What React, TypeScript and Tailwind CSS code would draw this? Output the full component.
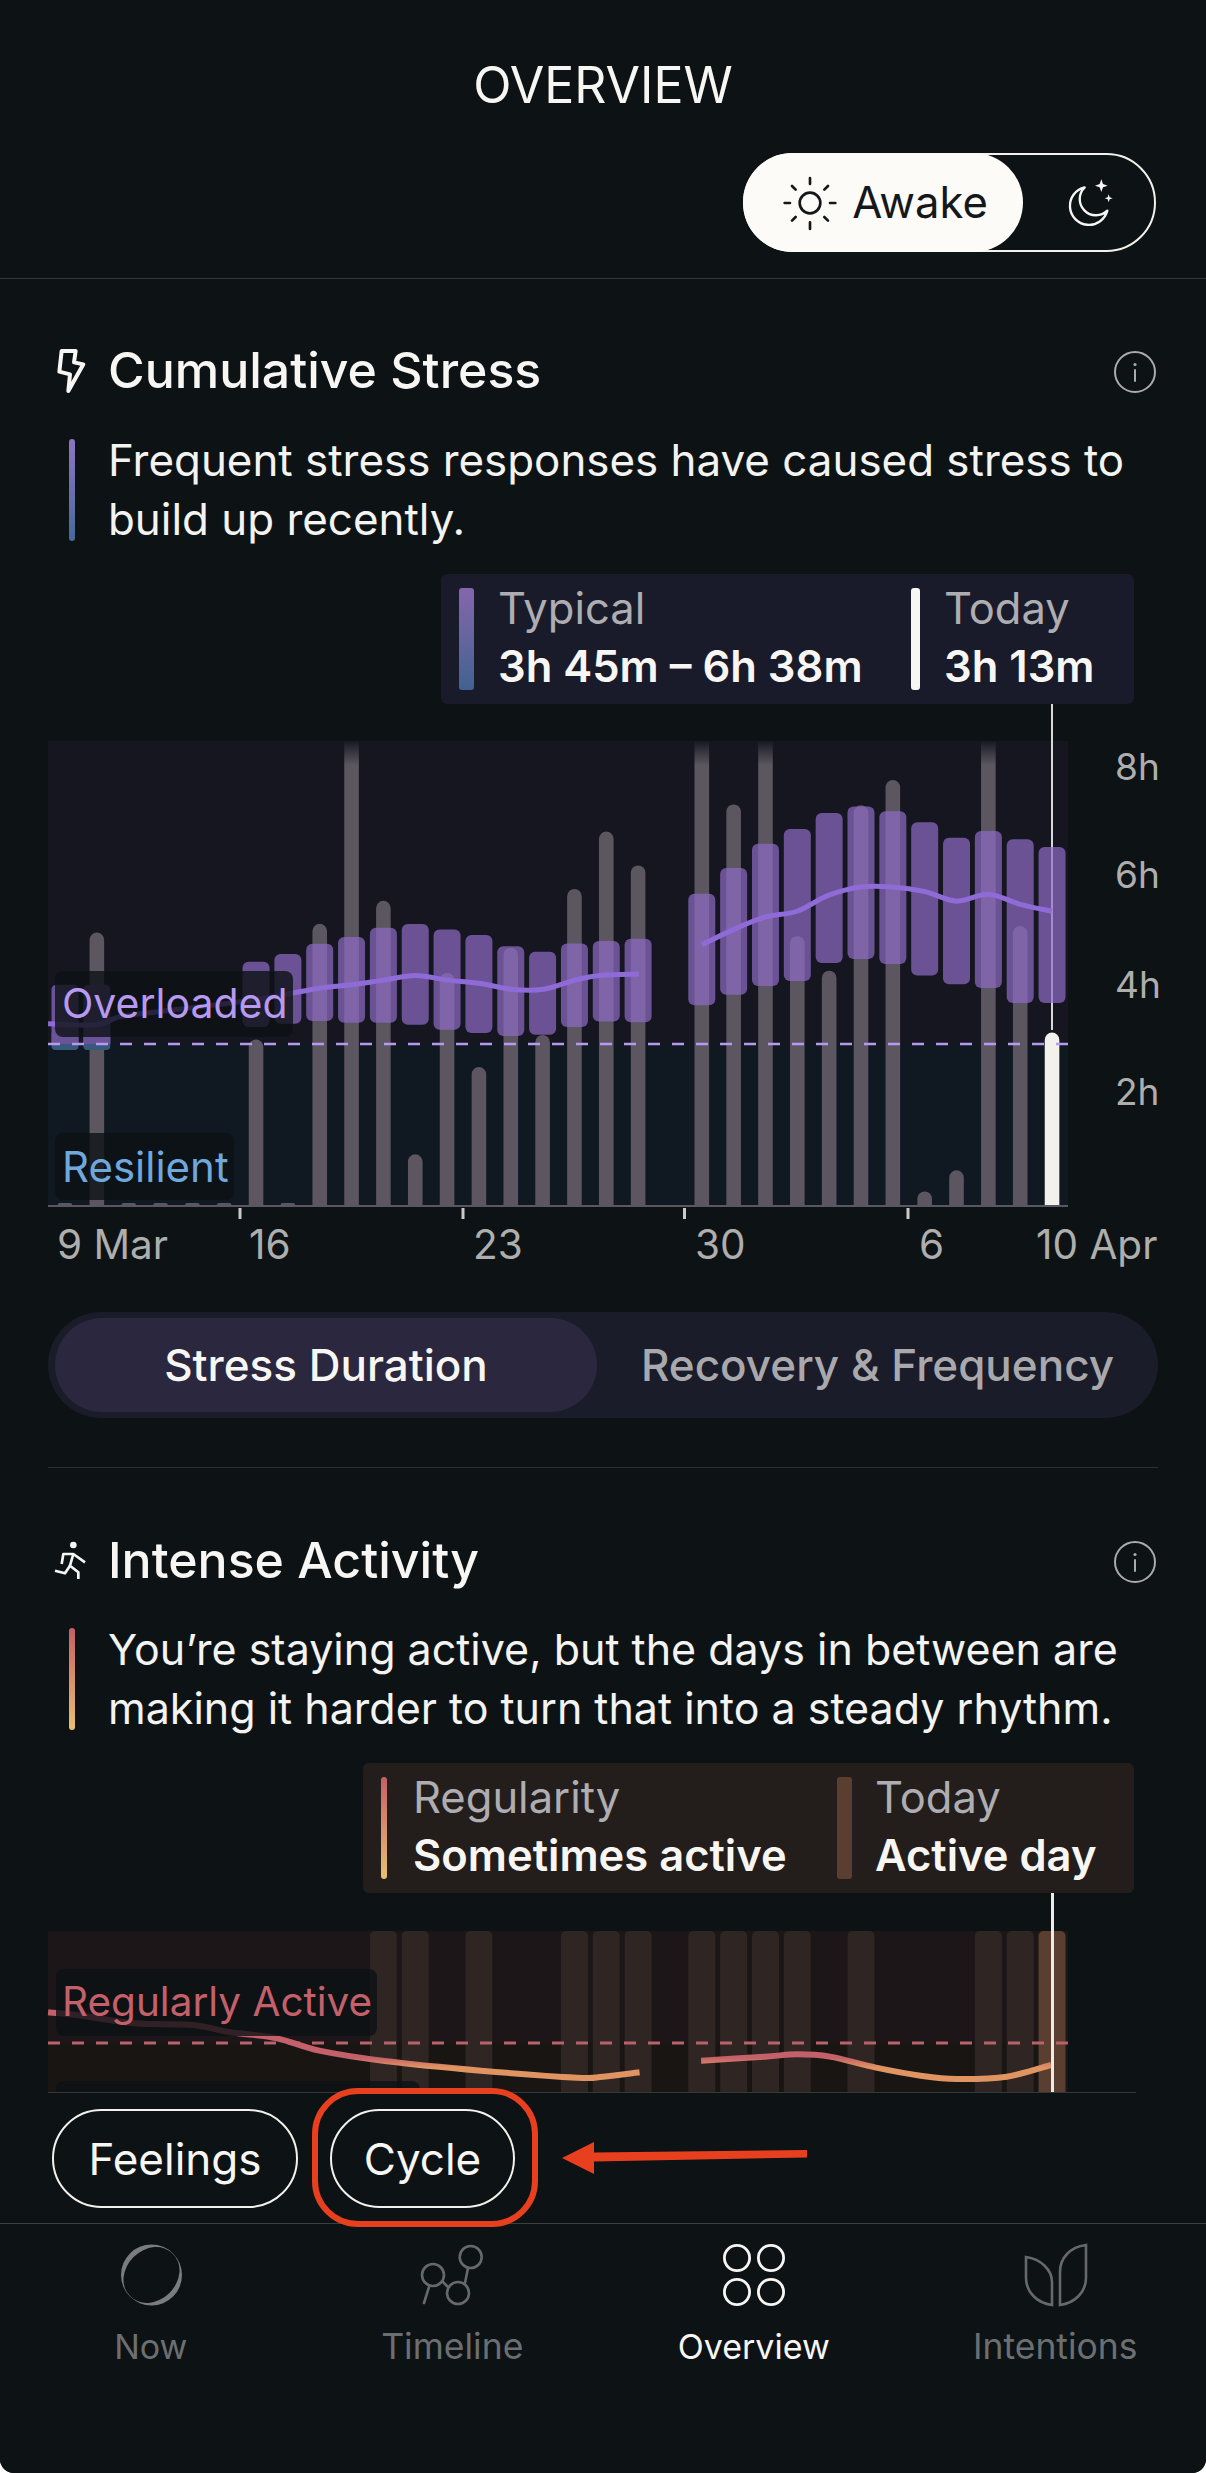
import React from "react";

const X = (i: number) => 65 + 31.84 * i;
const ZL = (x: number) => x / 2.6;
const ZR = (x: number) => 603 + x / 2.6;
const ZY = (y: number) => 560 + y / 2.178;
const Z3Y = (y: number) => 1900 + y / 3;

function smooth(p: number[][]) {
  let d = `M${p[0][0]} ${p[0][1]}`;
  for (let i = 0; i < p.length - 1; i++) {
    const a = p[Math.max(0, i - 1)], b = p[i], c = p[i + 1], e = p[Math.min(p.length - 1, i + 2)];
    d += ` C${b[0] + (c[0] - a[0]) / 6} ${b[1] + (c[1] - a[1]) / 6} ${c[0] - (e[0] - b[0]) / 6} ${c[1] - (e[1] - b[1]) / 6} ${c[0]} ${c[1]}`;
  }
  return d;
}

const bars: [number, number][] = [
  [1, 812], [6, 1045], [8, 793], [9, 400], [10, 743], [11, 1295], [12, 900], [13, 1105], [14, 845], [15, 1035], [16, 717], [17, 592], [18, 666],
  [20, 400], [21, 533], [22, 400], [23, 820], [24, 895], [25, 535], [26, 480], [27, 1376], [28, 1330], [29, 400], [30, 798],
];
const stubs = [0, 2, 3, 4, 5, 7];
const boxes: [number, number, number][] = [
  [6, 875, 1017], [7, 858, 1010], [8, 836, 1004], [9, 821, 1008], [10, 801, 1008], [11, 793, 1012], [12, 805, 1023], [13, 817, 1030], [14, 841, 1037], [15, 853, 1034], [16, 835, 1017], [17, 830, 1005], [18, 825, 1007],
  [20, 727, 970], [21, 671, 947], [22, 618, 928], [23, 586, 917], [24, 551, 878], [25, 537, 869], [26, 547, 880], [27, 571, 905], [28, 605, 924], [29, 590, 932], [30, 608, 965], [31, 625, 965],
];
const line1a = [[125, 1010], [252, 1012], [310, 995], [400, 985], [600, 965], [720, 950], [833, 932], [916, 925], [998, 915], [1081, 905], [1164, 915], [1246, 922], [1330, 935], [1413, 935], [1495, 915], [1560, 905]].map(([x, y]) => [ZL(x), ZY(y)]);
const line1a2 = [[93, 902]].map(([x, y]) => [ZR(x), ZY(y)]);
const line1b = [[257, 838], [339, 805], [421, 778], [504, 765], [587, 730], [670, 712], [752, 712], [836, 722], [919, 743], [1002, 728], [1085, 750], [1167, 765]].map(([x, y]) => [ZR(x), ZY(y)]);

const cols2 = [10, 11, 13, 16, 17, 18, 20, 21, 22, 23, 25, 29, 30];
const line2a = [
  ...[[125, 337], [200, 345], [350, 370], [500, 375], [600, 397], [720, 415], [830, 452], [1000, 483], [1250, 512], [1500, 533]].map(([x, y]) => [ZL(x), Z3Y(y)]),
  ...[[0, 530], [95, 517]].map(([x, y]) => [ZR(x), Z3Y(y)]),
];
const line2b = [[255, 482], [420, 470], [505, 463], [590, 470], [710, 503], [830, 528], [920, 537], [1050, 530], [1165, 495]].map(([x, y]) => [ZR(x), Z3Y(y)]);

function Info() {
  return (
    <svg width="44" height="44" viewBox="0 0 44 44" fill="none" className="mt-[3px] shrink-0">
      <circle cx="22" cy="22" r="20" stroke="#a9abad" strokeWidth="2" />
      <circle cx="22" cy="14.5" r="1.6" fill="#a9abad" />
      <path d="M22 20V31" stroke="#a9abad" strokeWidth="2" strokeLinecap="round" />
    </svg>
  );
}

function Bolt() {
  return (
    <svg width="40" height="55" viewBox="66 14 120 165" fill="none" className="ml-[52px]">
      <path d="M95 38 L137 38 L132 72 L160 78 L115 158 L120 108 L88 100 Z" stroke="#f7f6f3" strokeWidth="12" strokeLinejoin="round" />
    </svg>
  );
}

function Runner() {
  return (
    <svg width="60" height="55" viewBox="0 0 180 165" fill="none" stroke="#f7f6f3" strokeWidth="8" strokeLinejoin="round" strokeLinecap="butt" className="ml-[40px] mt-[3px]">
      <circle cx="100" cy="33" r="10" fill="#f7f6f3" stroke="none" />
      <path d="M65 90 L70 60 L100 60 L135 85" />
      <path d="M100 60 L90 95 L115 115 L115 135" />
      <path d="M90 95 L75 118 L45 110" />
    </svg>
  );
}

function Sun() {
  return (
    <svg width="56" height="56" viewBox="156 103 168 168" fill="none" stroke="#14181b" strokeWidth="8" strokeLinecap="round">
      <circle cx="240" cy="187" r="31" />
      <path d="M240 112V130M240 245V265M164 187H180M300 187H316M186 136L197 147M294 136L283 147M186 240L197 229M294 240L283 229" />
    </svg>
  );
}

function Moon() {
  return (
    <svg width="56" height="56" viewBox="1000 100 168 168" fill="none">
      <path d="M1068 137 A57 57 0 1 0 1136 207 A48 48 0 0 1 1068 137 Z" stroke="#f7f6f3" strokeWidth="7" strokeLinejoin="round" />
      <path d="M1118 113 L1123 127 L1137 132 L1123 137 L1118 151 L1113 137 L1099 132 L1113 127 Z" fill="#f7f6f3" />
      <path d="M1140 158 L1143 167 L1152 170 L1143 173 L1140 182 L1137 173 L1128 170 L1137 167 Z" fill="#f7f6f3" />
    </svg>
  );
}

function Title({ icon, children }: { icon: React.ReactNode; children: React.ReactNode }) {
  return (
    <div className="flex h-[46px] items-center justify-between pr-[49px]">
      <div className="flex items-center">
        <div className="flex w-[108px] justify-start">{icon}</div>
        <div className="text-[50px] font-medium leading-[46px] text-[#f7f6f3]">{children}</div>
      </div>
      <Info />
    </div>
  );
}

function Desc({ barClass, textClass, lines }: { barClass: string; textClass: string; lines: string[] }) {
  return (
    <div className="flex pl-[69px]">
      <div className={`my-[8px] w-[6px] rounded-full bg-gradient-to-b ${barClass}`} />
      <div className={`pl-[33px] leading-[59px] text-[#f3f3f1] ${textClass}`}>
        {lines.map((l) => (
          <div key={l}>{l}</div>
        ))}
      </div>
    </div>
  );
}

function LegendItem({ label, value, mark }: { label: string; value: string; mark: React.ReactNode }) {
  return (
    <div className="flex h-full items-stretch py-[14px]">
      {mark}
      <div className="-mt-[9px] flex flex-col">
        <div className="text-[43.5px] leading-[58px] text-[#aeaeb2]">{label}</div>
        <div className="text-[43.5px] font-semibold leading-[58px] text-[#f7f6f3]">{value}</div>
      </div>
    </div>
  );
}

function Chart1() {
  return (
    <div className="relative h-[570px] w-[1206px]">
      <svg width="1206" height="570" viewBox="0 704 1206 570" className="block">
        <defs>
          <linearGradient id="barfade" gradientUnits="userSpaceOnUse" x1="0" y1="741" x2="0" y2="765">
            <stop offset="0" stopColor="#5b5660" stopOpacity="0.05" />
            <stop offset="1" stopColor="#5b5660" />
          </linearGradient>
        </defs>
        <rect x="48" y="741" width="1020" height="303" fill="#151620" />
        <rect x="48" y="1044" width="1020" height="162" fill="#101822" />
        {stubs.map((i) => (
          <rect key={i} x={X(i) - 7.3} y={1203} width="14.6" height="4" rx="2" fill="#5b5660" />
        ))}
        {bars.map(([i, y]) =>
          y === 400 ? (
            <rect key={i} x={X(i) - 7.3} y={741} width="14.6" height={465} fill="url(#barfade)" />
          ) : (
            <path key={i} d={`M${X(i) - 7.3} 1206 V${ZY(y) + 7} a7.3 7.3 0 0 1 14.6 0 V1206 Z`} fill="#5b5660" />
          )
        )}
        <rect x="1051" y="700" width="2" height="330" fill="#d9d8d6" />
        <path d={`M${X(31) - 7.3} 1206 V${ZY(1030) + 7} a7.3 7.3 0 0 1 14.6 0 V1206 Z`} fill="#f3f1ec" />
        {[0, 1].map((i) => (
          <g key={i}>
            <rect x={X(i) - 13.5} y={1030} width="27" height="20" rx="4" fill="#37597c" />
            <path d={`M${X(i) - 13.5} 1044 V${ZY(925) + 5} a5 5 0 0 1 5 -5 h17 a5 5 0 0 1 5 5 V1044 Z`} fill="#6a5397" />
          </g>
        ))}
        {boxes.map(([i, t, b]) => (
          <rect key={i} x={X(i) - 13.5} y={ZY(t)} width="27" height={(b - t) / 2.178} rx="6" fill="#8f6cc8" fillOpacity="0.7" />
        ))}
        <path d={smooth([...line1a, ...line1a2])} fill="none" stroke="#8f6bd8" strokeWidth="5" />
        <path d={smooth(line1b)} fill="none" stroke="#8f6bd8" strokeWidth="5" />
        <line x1="48" y1="1044" x2="1068" y2="1044" stroke="#b79af0" strokeWidth="2.5" strokeDasharray="12 12" />
        <rect x="48" y="1205" width="1020" height="2" fill="#5b5660" />
        {[240, 463, 684.5, 908].map((x) => (
          <rect key={x} x={x - 1.5} y="1208" width="3" height="11" fill="#c9c9c9" />
        ))}
      </svg>
      <div className="absolute left-[55px] top-[267px] flex h-[66px] w-[238px] items-center rounded-[8px] bg-[#0d1215]/80 pl-[7px] text-[41px] text-[#b79af0]">Overloaded</div>
      <div className="absolute left-[55px] top-[429px] flex h-[67px] w-[179px] items-center rounded-[8px] bg-[#0d1215]/80 pl-[7px] text-[42px] text-[#6fa8dc]">Resilient</div>
      <div className="text-[37px] leading-[44px] text-[#aeaeae]">
        <div className="absolute left-[1115px] top-[41px]">8h</div>
        <div className="absolute left-[1115px] top-[149px]">6h</div>
        <div className="absolute left-[1115px] top-[259px]">4h</div>
        <div className="absolute left-[1115px] top-[366px]">2h</div>
      </div>
      <div className="text-[40.5px] leading-[44px] text-[#aeaeae]">
        <div className="absolute left-[57px] top-[519px]">9 Mar</div>
        <div className="absolute left-[249px] top-[519px]">16</div>
        <div className="absolute left-[473px] top-[519px]">23</div>
        <div className="absolute left-[695px] top-[519px]">30</div>
        <div className="absolute left-[919px] top-[519px]">6</div>
        <div className="absolute left-[1036px] top-[519px]">10 Apr</div>
      </div>
    </div>
  );
}

function Chart2() {
  return (
    <div className="relative h-[199px] w-[1206px]">
      <svg width="1206" height="199" viewBox="0 1893 1206 199" className="block">
        <defs>
          <linearGradient id="line2" gradientUnits="userSpaceOnUse" x1="0" y1="2045" x2="0" y2="2070">
            <stop offset="0.5" stopColor="#c4606a" />
            <stop offset="0.9" stopColor="#e09462" />
          </linearGradient>
        </defs>
        <rect x="48" y="1931" width="1020" height="112" fill="#1c1618" />
        <rect x="48" y="2043" width="1020" height="49" fill="#181512" />
        {cols2.map((i) => (
          <path key={i} d={`M${X(i) - 13.5} 2092 V1936 a5 5 0 0 1 5 -5 h17 a5 5 0 0 1 5 5 V2092 Z`} fill="#2f2523" />
        ))}
        <path d={`M${X(31) - 13.5} 2092 V1936 a5 5 0 0 1 5 -5 h17 a5 5 0 0 1 5 5 V2092 Z`} fill="#5a3f30" />
        <line x1="48" y1="2043" x2="1068" y2="2043" stroke="#b8636b" strokeWidth="3" strokeDasharray="12 12" />
        <path d={smooth(line2a)} fill="none" stroke="url(#line2)" strokeWidth="6" />
        <path d={smooth(line2b)} fill="none" stroke="url(#line2)" strokeWidth="6" />
        <rect x="1051" y="1893" width="3" height="199" fill="#ecebe8" />
      </svg>
      <div className="absolute left-[56px] top-[76px] flex h-[67px] w-[321px] items-center rounded-[8px] bg-[#0d1215]/80 pl-[6px] text-[40.5px] text-[#c4606a]">Regularly Active</div>
      <div className="absolute left-[56px] top-[188px] h-[40px] w-[364px] rounded-[8px] bg-[#0d1215]/80" />
    </div>
  );
}

function NavItem({ label, active, size, children }: { label: string; active?: boolean; size: string; children: React.ReactNode }) {
  return (
    <div className="flex flex-col items-center">
      {children}
      <div className={`mt-[5px] leading-[44px] ${size} ${active ? "text-[#f7f6f3]" : "text-[#6c6f71]"}`}>{label}</div>
    </div>
  );
}

export default function App() {
  return (
    <div className="flex h-[2473px] w-[1206px] flex-col overflow-hidden rounded-b-[14px] bg-[#0d1215] font-['Inter',sans-serif]">
      <header className="flex h-[279px] shrink-0 flex-col border-b border-[#33383b]">
        <div className="mt-[60px] h-[50px] text-center text-[50px] leading-[50px] text-[#f7f6f3]">OVERVIEW</div>
        <div className="mr-[50px] mt-[43px] flex h-[99px] w-[413px] self-end rounded-full border-2 border-[#f3f1ec]">
          <div className="-m-[2px] flex h-[99px] w-[280px] items-center justify-center gap-[14px] rounded-full bg-[#fdfbf7] pl-[4px] text-[43.6px] text-[#14181b]">
            <Sun />
            <span>Awake</span>
          </div>
          <div className="flex flex-1 items-center justify-center pl-[5px]">
            <Moon />
          </div>
        </div>
      </header>

      <main className="min-h-0 flex-1 overflow-hidden">
        <section className="pt-[68px]">
          <Title icon={<Bolt />}>Cumulative Stress</Title>
          <div className="mt-[38px]">
            <Desc barClass="from-[#8f74c4] to-[#45699a]" textClass="text-[43.9px]" lines={["Frequent stress responses have caused stress to", "build up recently."]} />
          </div>
          <div className="ml-[441px] mt-[25px] flex h-[130px] w-[693px] rounded-[6px] bg-[#1a1b2a]">
            <div className="ml-[18px] w-[452px]">
              <LegendItem
                label="Typical"
                value="3h 45m – 6h 38m"
                mark={<div className="mr-[24px] w-[15px] rounded-[3px] bg-gradient-to-b from-[#8466ad] to-[#3f6290]" />}
              />
            </div>
            <div>
              <LegendItem
                label="Today"
                value="3h 13m"
                mark={<div className="mr-[24px] w-[9px] rounded-[3px] bg-[#f7f6f3]" />}
              />
            </div>
          </div>
          <Chart1 />
          <div className="mx-[48px] mt-[38px] flex h-[106px] rounded-full bg-[#1a1c29] py-[6px] pl-[7px]">
            <div className="flex w-[542px] items-center justify-center rounded-full bg-[#2b273f] text-[44px] font-medium text-[#f7f6f3]">Stress Duration</div>
            <div className="flex flex-1 items-center justify-center text-[44px] font-medium text-[#a9a9ad]">Recovery &amp; Frequency</div>
          </div>
          <div className="mx-[48px] mt-[49px] h-px bg-[#2a2f32]" />
        </section>

        <section className="pt-[69px]">
          <Title icon={<Runner />}>Intense Activity</Title>
          <div className="mt-[37px]">
            <Desc barClass="from-[#c45f66] to-[#e8c070]" textClass="text-[43px]" lines={["You’re staying active, but the days in between are", "making it harder to turn that into a steady rhythm."]} />
          </div>
          <div className="ml-[363px] mt-[25px] flex h-[130px] w-[771px] rounded-[6px] bg-[#231e1c]">
            <div className="ml-[18px] w-[456px]">
              <LegendItem
                label="Regularity"
                value="Sometimes active"
                mark={<div className="mr-[26px] w-[6px] rounded-[3px] bg-gradient-to-b from-[#c45f66] to-[#e8c070]" />}
              />
            </div>
            <div>
              <LegendItem
                label="Today"
                value="Active day"
                mark={<div className="mr-[23px] w-[15px] rounded-[3px] bg-[#5a3f30]" />}
              />
            </div>
          </div>
          <Chart2 />
        </section>
      </main>

      <footer className="relative h-[381px] shrink-0 bg-[#0d1215]">
        <div className="ml-[48px] h-px w-[1088px] bg-[#33383b]" />
        <div className="flex h-[130px] gap-[32px] pl-[52px] pt-[16px]">
          <div className="flex h-[99px] w-[246px] items-center justify-center rounded-full border-2 border-[#f3f1ec] text-[44px] text-[#f7f6f3]">Feelings</div>
          <div className="flex h-[99px] w-[185px] items-center justify-center rounded-full border-2 border-[#f3f1ec] text-[44px] text-[#f7f6f3]">Cycle</div>
        </div>
        <div className="h-px bg-[#3a3f42]" />
        <div className="grid grid-cols-4 pt-[11px]">
          <NavItem label="Now" size="text-[34px]">
            <svg width="80" height="85" viewBox="111 2235 80 85">
              <path fillRule="evenodd" fill="#7a7d7f" d="M121 2275 A30.5 30.5 0 1 1 182 2275 A30.5 30.5 0 1 1 121 2275 Z M172.7 2253.8 A30 24.5 -45 1 0 130.3 2296.2 A30 24.5 -45 1 0 172.7 2253.8 Z" />
            </svg>
          </NavItem>
          <NavItem label="Timeline" size="text-[35.5px]">
            <svg width="80" height="85" viewBox="412 2235 80 85" fill="none" stroke="#66696b" strokeWidth="2.6" strokeLinecap="round">
              <circle cx="433" cy="2275" r="11" />
              <circle cx="458" cy="2293" r="11" />
              <circle cx="470.7" cy="2257" r="11" />
              <path d="M429 2287 L424 2303 M443 2282 L448 2287 M468 2268 L465 2283" />
            </svg>
          </NavItem>
          <NavItem label="Overview" active size="text-[34px]">
            <svg width="80" height="85" viewBox="714 2235 80 85" fill="none" stroke="#f7f6f3" strokeWidth="2.8">
              <circle cx="737" cy="2258" r="12.6" />
              <circle cx="771" cy="2258" r="12.6" />
              <circle cx="737" cy="2292" r="12.6" />
              <circle cx="771" cy="2292" r="12.6" />
            </svg>
          </NavItem>
          <NavItem label="Intentions" size="text-[35.5px]">
            <svg width="80" height="85" viewBox="1015 2235 80 85" fill="none" stroke="#66696b" strokeWidth="2.6">
              <path d="M1086 2245 C1070 2247 1060 2258 1060 2272 V2305 C1075 2303 1086 2292 1086 2278 Z" />
              <path d="M1026 2257 C1041 2259 1052 2270 1052 2282 V2305 C1037 2303 1026 2292 1026 2278 Z" />
            </svg>
          </NavItem>
        </div>
        <div className="absolute left-[312px] top-[-4px] h-[139px] w-[226px] rounded-[46px] border-[6px] border-[#e8401f]" />
        <svg width="260" height="40" viewBox="0 0 260 40" className="absolute left-[555px] top-[45px]">
          <path d="M7 21 L39 5 V15.5 L252 13 V20.5 L39 24.5 V37 Z" fill="#e8401f" />
        </svg>
      </footer>
    </div>
  );
}
